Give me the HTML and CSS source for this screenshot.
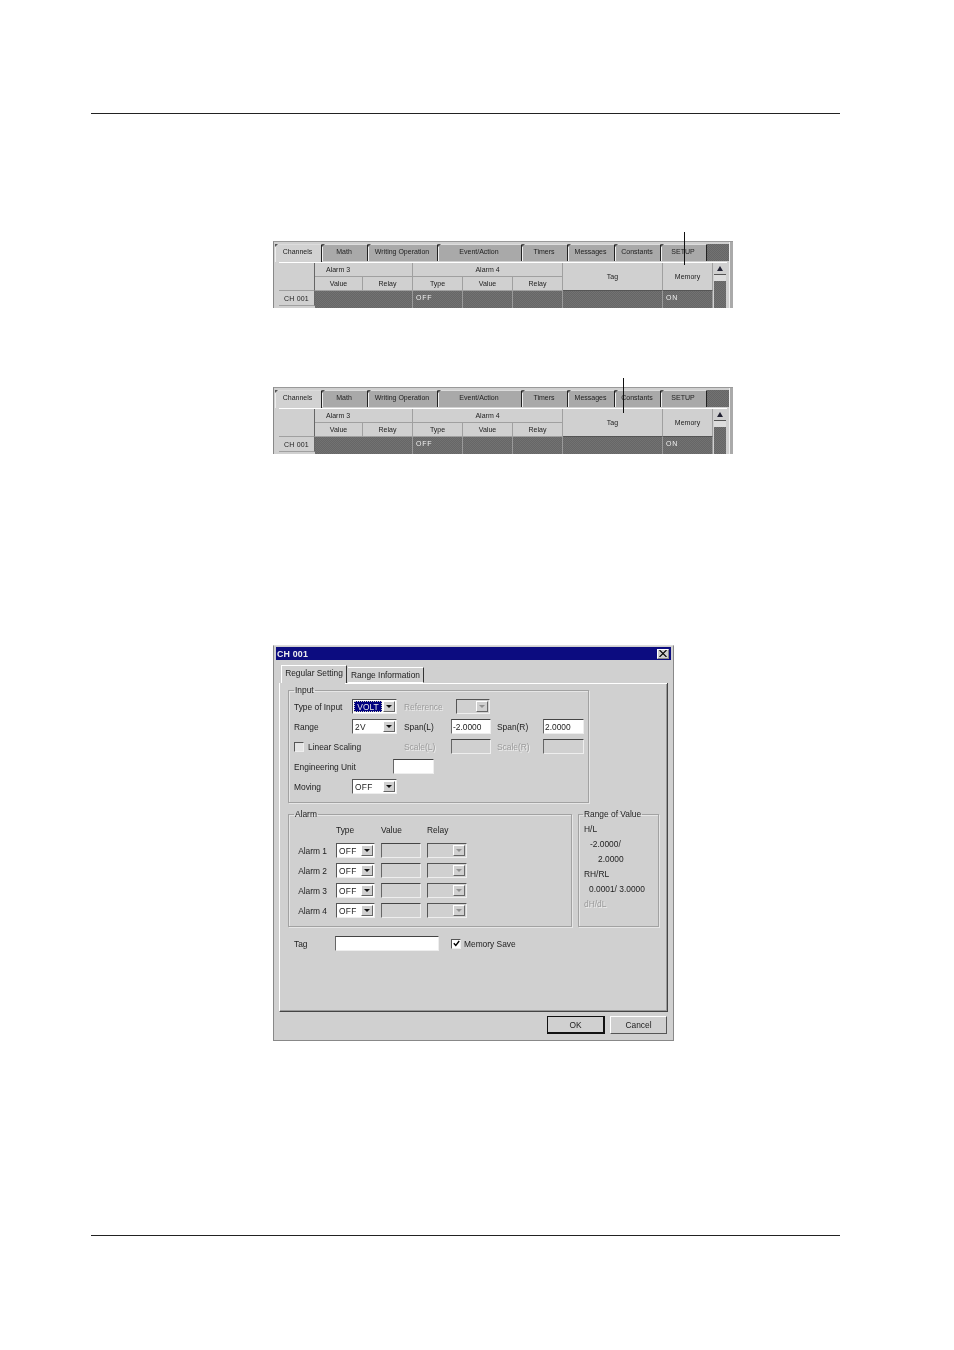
FILE: index.html
```html
<!DOCTYPE html>
<html lang="en">
<head>
<meta charset="utf-8">
<title>CH 001</title>
<link rel="stylesheet" href="styles.css">
</head>
<body>
<div class="page">
  <div class="rule rule-top"></div>

  <div class="shotwrap shot-one">
    <span class="callout callout-memory"></span>
    <section class="shot">
      <div class="tabs">
        <span class="tab active w47">Channels</span><span class="tab w46">Math</span><span class="tab w70">Writing Operation</span><span class="tab w84">Event/Action</span><span class="tab w46">Timers</span><span class="tab w47">Messages</span><span class="tab w46">Constants</span><span class="tab w46">SETUP</span><span class="tab-rest"></span>
      </div>
      <div class="sheet">
        <div class="cell corner"></div>
        <div class="cell alarm3">Alarm 3</div>
        <div class="cell alarm4">Alarm 4</div>
        <div class="cell tagcol">Tag</div>
        <div class="cell memcol">Memory</div>
        <div class="scroll"><span class="scroll-up"><i class="up"></i></span><span class="scroll-thumb"></span></div>
        <div class="cell">Value</div><div class="cell">Relay</div><div class="cell">Type</div><div class="cell">Value</div><div class="cell">Relay</div>
        <div class="cell rowhead">CH 001</div>
        <div class="cell dark span2"></div>
        <div class="cell dark left">OFF</div><div class="cell dark"></div><div class="cell dark"></div><div class="cell dark"></div>
        <div class="cell dark left">ON</div>
      </div>
    </section>
  </div>

  <div class="shotwrap shot-two">
    <span class="callout callout-tag"></span>
    <section class="shot">
      <div class="tabs">
        <span class="tab active w47">Channels</span><span class="tab w46">Math</span><span class="tab w70">Writing Operation</span><span class="tab w84">Event/Action</span><span class="tab w46">Timers</span><span class="tab w47">Messages</span><span class="tab w46">Constants</span><span class="tab w46">SETUP</span><span class="tab-rest"></span>
      </div>
      <div class="sheet">
        <div class="cell corner"></div>
        <div class="cell alarm3">Alarm 3</div>
        <div class="cell alarm4">Alarm 4</div>
        <div class="cell tagcol">Tag</div>
        <div class="cell memcol">Memory</div>
        <div class="scroll"><span class="scroll-up"><i class="up"></i></span><span class="scroll-thumb"></span></div>
        <div class="cell">Value</div><div class="cell">Relay</div><div class="cell">Type</div><div class="cell">Value</div><div class="cell">Relay</div>
        <div class="cell rowhead">CH 001</div>
        <div class="cell dark span2"></div>
        <div class="cell dark left">OFF</div><div class="cell dark"></div><div class="cell dark"></div><div class="cell dark"></div>
        <div class="cell dark left">ON</div>
      </div>
    </section>
  </div>

  <section class="dialog">
    <header class="titlebar">
      <span>CH 001</span>
      <span class="close"><svg width="8" height="7" viewBox="0 0 8 7"><path d="M0.5 0 L7.5 7 M7.5 0 L0.5 7" stroke="#000" stroke-width="1.1" fill="none"/></svg></span>
    </header>
    <div class="dtabs">
      <span class="dtab dtab-on">Regular Setting</span><span class="dtab dtab-off">Range Information</span>
    </div>
    <div class="panel">
      <fieldset class="group group-input">
        <legend>Input</legend>
        <div class="frow">
          <label class="l58">Type of Input</label>
          <span class="combo w45"><span class="sel">VOLT</span><b class="drop"><i class="down"></i></b></span>
          <label class="l52 off">Reference</label>
          <span class="combo w34 disabled"><span class="val"></span><b class="drop"><i class="down"></i></b></span>
        </div>
        <div class="frow">
          <label class="l58">Range</label>
          <span class="combo w45"><span class="val">2V</span><b class="drop"><i class="down"></i></b></span>
          <label class="l47">Span(L)</label>
          <span class="input w40">-2.0000</span>
          <label class="l46">Span(R)</label>
          <span class="input w41">2.0000</span>
        </div>
        <div class="frow">
          <span class="check"></span>
          <label class="l48">Linear Scaling</label>
          <label class="l47 off">Scale(L)</label>
          <span class="input w40 disabled"></span>
          <label class="l46 off">Scale(R)</label>
          <span class="input w41 disabled"></span>
        </div>
        <div class="frow">
          <label class="l99">Engineering Unit</label>
          <span class="input w41"></span>
        </div>
        <div class="frow">
          <label class="l58">Moving</label>
          <span class="combo w45"><span class="val">OFF</span><b class="drop"><i class="down"></i></b></span>
        </div>
      </fieldset>

      <div class="lower">
        <fieldset class="group group-alarm">
          <legend>Alarm</legend>
          <div class="agrid">
            <span></span><span class="ahead">Type</span><span class="ahead">Value</span><span class="ahead">Relay</span>
            <label class="aname">Alarm 1</label><span class="combo"><span class="val">OFF</span><b class="drop"><i class="down"></i></b></span><span class="input disabled"></span><span class="combo disabled"><span class="val"></span><b class="drop"><i class="down"></i></b></span>
            <label class="aname">Alarm 2</label><span class="combo"><span class="val">OFF</span><b class="drop"><i class="down"></i></b></span><span class="input disabled"></span><span class="combo disabled"><span class="val"></span><b class="drop"><i class="down"></i></b></span>
            <label class="aname">Alarm 3</label><span class="combo"><span class="val">OFF</span><b class="drop"><i class="down"></i></b></span><span class="input disabled"></span><span class="combo disabled"><span class="val"></span><b class="drop"><i class="down"></i></b></span>
            <label class="aname">Alarm 4</label><span class="combo"><span class="val">OFF</span><b class="drop"><i class="down"></i></b></span><span class="input disabled"></span><span class="combo disabled"><span class="val"></span><b class="drop"><i class="down"></i></b></span>
          </div>
        </fieldset>
        <fieldset class="group group-range">
          <legend>Range of Value</legend>
          <p>H/L</p>
          <p class="ind6">-2.0000/</p>
          <p class="ind14">2.0000</p>
          <p>RH/RL</p>
          <p class="ind5">0.0001/ 3.0000</p>
          <p class="off">dH/dL</p>
        </fieldset>
      </div>

      <div class="tagrow">
        <label class="l47">Tag</label>
        <span class="input w104"></span>
        <span class="check checked"><svg width="7" height="7" viewBox="0 0 7 7"><path d="M0.8 3.2 L2.8 5.4 L6.2 1" stroke="#000" stroke-width="1.4" fill="none"/></svg></span>
        <label>Memory Save</label>
      </div>
    </div>
    <footer class="actions">
      <span class="btn btn-default">OK</span>
      <span class="btn btn-cancel">Cancel</span>
    </footer>
  </section>

  <div class="rule rule-bottom"></div>
</div>
</body>
</html>
```
FILE: styles.css
```css
* { box-sizing: border-box; }
html, body { margin: 0; padding: 0; background: #fff; }
body { width: 954px; height: 1350px; overflow: hidden; font-family: "Liberation Sans", Arial, sans-serif; color: #222; }
.page { display: flow-root; padding-top: 113px; }
.rule { height: 1px; width: 749px; margin-left: 91px; background: #222; }
.rule-bottom { margin-top: 194px; }

/* spreadsheet screenshots */
.shotwrap { position: relative; width: 460px; height: 67px; margin-left: 273px; }
.shot-one { margin-top: 127px; }
.shot-two { margin-top: 79px; }
.shot { position: relative; width: 460px; height: 67px; background: #d0d0d0; border-top: 1px solid #999; border-left: 1px solid #888; padding: 2px 0 0 1px; font-size: 7px; filter: blur(0.35px); overflow: hidden; }
.shot::after { content: ""; position: absolute; right: 0; top: 0; bottom: 0; width: 3px; background: #aaa; border-left: 1px solid #eee; }
.callout { position: absolute; width: 1px; background: #111; z-index: 2; }
.callout-memory { left: 411px; top: -9px; height: 33px; }
.callout-tag { left: 350px; top: -9px; height: 35px; }
.tabs { display: flex; height: 17px; width: 454px; }
.tab { position: relative; display: flex; align-items: center; justify-content: center; height: 17px; padding: 0 2px 4px 0; background: #a9a9a9; border-right: 1px solid #222; border-left: 1px solid #eee; border-top: 1px solid #ddd; white-space: nowrap; }
.tab::before { content: ""; position: absolute; left: -1px; top: -1px; border-top: 3px solid #555; border-right: 3px solid transparent; }
.tab.active { background: #d2d2d2; border-bottom: 0; height: 18px; padding-bottom: 5px; z-index: 1; }
.w47 { width: 47px; }
.w46 { width: 46px; }
.w70 { width: 70px; }
.w84 { width: 84px; }
.tab-rest { width: 22px; height: 17px; background: repeating-conic-gradient(#666 0 25%, #727272 0 50%) 0 0 / 2px 2px; }
.sheet { display: grid; grid-template-columns: 36px 48px 50px 50px 50px 50px 100px 50px 13px; grid-template-rows: 14px 14px 18px; margin: 1px 0 0 4px; width: 448px; border-top: 1px solid #fff; background: #d0d0d0; }
.cell { display: flex; align-items: center; justify-content: center; background: #d0d0d0; border-right: 1px solid #a0a0a0; border-bottom: 1px solid #a0a0a0; min-width: 0; }
.corner { grid-row: 1 / span 2; border-right-color: #666; }
.alarm3 { grid-column: 2 / span 2; justify-content: flex-start; padding-left: 11px; }
.alarm4 { grid-column: 4 / span 3; }
.tagcol { grid-column: 7; grid-row: 1 / span 2; border-bottom-color: #555; }
.memcol { grid-column: 8; grid-row: 1 / span 2; border-bottom-color: #555; }
.scroll { grid-column: 9; grid-row: 1 / span 3; display: flex; flex-direction: column; background: repeating-conic-gradient(#666 0 25%, #727272 0 50%) 0 0 / 2px 2px; margin-left: 1px; }
.scroll-up { display: flex; align-items: center; justify-content: center; height: 12px; background: #d0d0d0; border-bottom: 1px solid #555; }
.scroll-thumb { height: 6px; background: #ddd; }
.up { width: 0; height: 0; border-left: 3px solid transparent; border-right: 3px solid transparent; border-bottom: 5px solid #223; }
.rowhead { height: 15px; align-self: start; border-right-color: #666; letter-spacing: 0.2px; }
.dark { background: repeating-conic-gradient(#666 0 25%, #727272 0 50%) 0 0 / 2px 2px; color: #f0f0f0; border-right: 1px solid #999; border-bottom: 0; align-items: flex-start; padding-top: 3px; }
.span2 { grid-column: 2 / span 2; }
.left { justify-content: flex-start; padding-left: 3px; letter-spacing: 0.8px; }

/* dialog */
.dialog { display: flex; flex-direction: column; width: 401px; height: 396px; margin: 191px 0 0 273px; padding: 1px 2px 2px; background: #d0d0d0; border: 1px solid #888; border-top-color: #ddd; font-size: 8.4px; filter: blur(0.35px); }
.titlebar { display: flex; align-items: center; justify-content: space-between; height: 13px; padding: 0 2px 0 1px; background: #0c0c80; color: #eee; font-size: 8.8px; font-weight: 700; letter-spacing: 0.2px; }
.close { display: flex; align-items: center; justify-content: center; width: 12px; height: 10px; background: #d0d0d0; border: 1px solid #888; border-top-color: #fff; border-left-color: #fff; }
.dtabs { display: flex; align-items: flex-end; height: 23px; padding-left: 5px; white-space: nowrap; }
.dtab { display: flex; align-items: center; justify-content: center; }
.dtab-on { width: 66px; height: 18px; border-top: 1px solid #fff; border-left: 1px solid #fff; border-right: 1px solid #333; padding-bottom: 3px; }
.dtab-off { width: 76px; height: 16px; margin-left: 1px; border-top: 1px solid #fff; border-right: 1px solid #333; border-bottom: 1px solid #fff; }
.panel { height: 329px; width: 389px; margin-left: 3px; padding: 3px 0 0 8px; border-left: 1px solid #fff; border-right: 1px solid #444; border-bottom: 1px solid #444; box-shadow: inset -1px -1px 0 #999; position: relative; }
.panel::before { content: ""; position: absolute; top: 0; left: 65px; right: 0; height: 1px; background: #fff; }
.group { margin: 0; padding: 0; border: 1px solid #a2a2a2; box-shadow: inset 1px 1px 0 #e6e6e6, 1px 1px 0 #e6e6e6; min-width: 0; }
.group legend { padding: 0 1px; margin-left: 0; font-size: 8.4px; line-height: 9px; }
.group-input { display: flex; flex-direction: column; gap: 5px; width: 301px; height: 117px; padding: 4px 0 0 5px; }
.frow { display: flex; align-items: center; height: 15px; flex: none; }
label { white-space: nowrap; }
.l47, .l46, .l48, .l52, .l58, .l99 { display: block; flex: none; }
.l58 { width: 58px; }
.l52 { width: 52px; margin-left: 7px; }
.l47 { width: 47px; }
.l46 { width: 46px; margin-left: 6px; }
.l48 { width: 100px; padding-left: 4px; }
.l99 { width: 99px; }
.frow > .l47 { margin-left: 7px; }
.frow > .check + .l48 + .l47 { margin-left: 0; }
.off { color: #9a9a9a; text-shadow: 1px 1px 0 #eee; }
.combo { display: flex; align-items: stretch; height: 15px; padding: 1px; background: #fff; border-top: 1px solid #555; border-left: 1px solid #555; border-right: 1px solid #eee; border-bottom: 1px solid #eee; min-width: 0; }
.combo.w45 { width: 45px; flex: none; }
.combo.w34 { width: 34px; flex: none; }
.val { flex: 1; display: flex; align-items: center; padding-left: 1px; letter-spacing: 0.3px; min-width: 0; }
.sel { flex: 1; display: flex; align-items: center; justify-content: center; background: #000080; color: #e8e8e8; outline: 1px dotted #ccb; outline-offset: -1px; min-width: 0; margin-right: 1px; }
.drop { display: flex; align-items: center; justify-content: center; width: 12px; flex: none; background: #d0d0d0; border: 1px solid #666; border-top-color: #fff; border-left-color: #fff; }
.down { width: 0; height: 0; border-left: 3px solid transparent; border-right: 3px solid transparent; border-top: 3px solid #111; }
.combo.disabled { background: #d0d0d0; }
.combo.disabled .down { border-top-color: #909090; }
.input { display: flex; align-items: center; height: 15px; padding-left: 1px; background: #fff; border-top: 1px solid #444; border-left: 1px solid #666; border-right: 1px solid #eee; border-bottom: 1px solid #eee; }
.input.disabled { background: #d0d0d0; }
.w40 { width: 40px; flex: none; }
.w41 { width: 41px; flex: none; }
.w104 { width: 104px; flex: none; }
.check { display: flex; align-items: center; justify-content: center; width: 10px; height: 10px; flex: none; background: #fff; border-top: 1px solid #555; border-left: 1px solid #555; border-right: 1px solid #eee; border-bottom: 1px solid #eee; }
.frow .check { background: #e4e4e4; }
.lower { display: flex; gap: 6px; margin-top: 7px; }
.group-alarm { width: 284px; height: 117px; padding: 6px 0 0 0; }
.group-alarm legend { margin-left: 5px; }
.agrid { display: grid; grid-template-columns: 38px 39px 40px 40px; grid-template-rows: 13px repeat(4, 15px); row-gap: 5px; column-gap: 6px; padding-left: 3px; align-items: center; }
.ahead { align-self: start; }
.aname { text-align: right; padding-right: 3px; }
.group-range { width: 81px; height: 117px; padding: 3px 0 0 5px; }
.group-range legend { margin-left: -1px; }
.group-range p { margin: 0; height: 15px; line-height: 15px; white-space: nowrap; }
.ind6 { padding-left: 6px; }
.ind14 { padding-left: 14px; }
.ind5 { padding-left: 5px; }
.tagrow { display: flex; align-items: center; height: 15px; margin-top: 9px; padding-left: 6px; }
.tagrow .l47 { width: 41px; }
.tagrow .check { margin: 0 3px 0 12px; }
.actions { display: flex; justify-content: flex-end; gap: 5px; margin-top: 4px; padding-right: 4px; }
.btn { display: flex; align-items: center; justify-content: center; width: 58px; height: 18px; background: #d0d0d0; border: 1px solid #555; border-top-color: #fff; border-left-color: #fff; }
.btn-cancel { width: 57px; }
.btn-default { border: 1px solid #111; border-right-width: 2px; border-bottom-width: 2px; }
```
